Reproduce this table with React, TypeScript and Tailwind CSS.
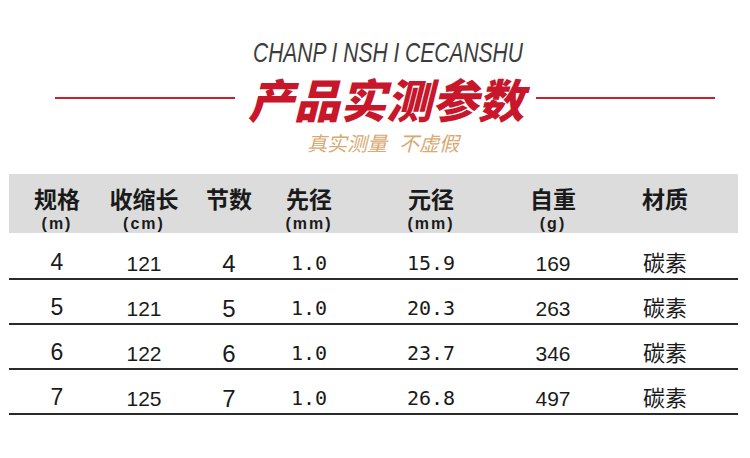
import React from 'react';

const cjk = "font-['Noto_Sans_CJK_SC',sans-serif]";
const latin = "font-['Liberation_Sans','Noto_Sans_CJK_SC',sans-serif]";
const mono = "font-['DejaVu_Sans_Mono',monospace]";

const cols = 'grid grid-cols-[96px_78px_92px_68px_176px_68px_156px]';

const headers = [
  { name: '规格', unit: '(m)' },
  { name: '收缩长', unit: '(cm)' },
  { name: '节数', unit: '' },
  { name: '先径', unit: '(mm)' },
  { name: '元径', unit: '(mm)' },
  { name: '自重', unit: '(g)' },
  { name: '材质', unit: '' },
];

const rows = [
  ['4', '121', '4', '1.0', '15.9', '169', '碳素'],
  ['5', '121', '5', '1.0', '20.3', '263', '碳素'],
  ['6', '122', '6', '1.0', '23.7', '346', '碳素'],
  ['7', '125', '7', '1.0', '26.8', '497', '碳素'],
];

export default function App() {
  return (
    <div className="w-[750px] h-[458px] bg-white overflow-hidden text-[#1a1a1a]">
      <div className="pl-[253px] pt-[39px] h-[67px]">
        <span className={`block w-fit origin-left scale-x-[0.75] italic text-[28px] leading-[28px] whitespace-pre text-[#3c3c3c] ${latin}`}>
          CHANP I NSH I CECANSHU
        </span>
      </div>

      <div className="flex items-center pl-[55px] mt-[8px] h-[46px]">
        <div className="w-[180px] h-[2px] bg-[#c8202c]"></div>
        <div className={`ml-[12px] w-[278px] text-center text-[46px] leading-[46px] font-black italic text-[#c8162a] whitespace-nowrap ${cjk}`}>
          产品实测参数
        </div>
        <div className="ml-[11px] w-[179px] h-[2px] bg-[#c8202c]"></div>
      </div>

      <div className={`pl-[307px] mt-[12px] flex gap-[12px] text-[20px] leading-[20px] italic text-[#d8aa72] ${cjk}`}>
        <span>真实测量</span>
        <span>不虚假</span>
      </div>

      <div className="mt-[21px] ml-[9px] w-[729px]">
        <div className={`${cols} h-[59px] bg-[#dcdcdc]`}>
          {headers.map((h) => (
            <div key={h.name} className={`flex flex-col items-center pt-[10px] ${cjk}`}>
              <span className="text-[23px] leading-[28px] font-bold whitespace-nowrap">{h.name}</span>
              <span className={`text-[16px] leading-[16px] font-bold tracking-[2px] mt-[4px] whitespace-nowrap ${latin}`}>
                {h.unit}
              </span>
            </div>
          ))}
        </div>

        {rows.map((r, i) => (
          <div
            key={i}
            className={`${cols} ${i === 0 ? 'h-[47px]' : 'h-[45px]'} border-b-2 border-[#2a2a2a]`}
          >
            <div className={`flex items-end justify-center pb-[3px] text-[23px] leading-[26px] ${latin}`}>{r[0]}</div>
            <div className={`flex items-end justify-center pb-[2px] text-[21px] leading-[24px] ${latin}`}>{r[1]}</div>
            <div className={`flex items-end justify-center pb-[1px] text-[24px] leading-[26px] ${latin}`}>{r[2]}</div>
            <div className={`flex items-end justify-center pb-[3px] text-[20px] leading-[24px] ${mono}`}>{r[3]}</div>
            <div className={`flex items-end justify-center pb-[3px] text-[20px] leading-[24px] ${mono}`}>{r[4]}</div>
            <div className={`flex items-end justify-center pb-[2px] text-[21px] leading-[24px] ${latin}`}>{r[5]}</div>
            <div className={`flex items-end justify-center pb-[4px] text-[22px] leading-[26px] ${cjk}`}>{r[6]}</div>
          </div>
        ))}
      </div>
    </div>
  );
}
